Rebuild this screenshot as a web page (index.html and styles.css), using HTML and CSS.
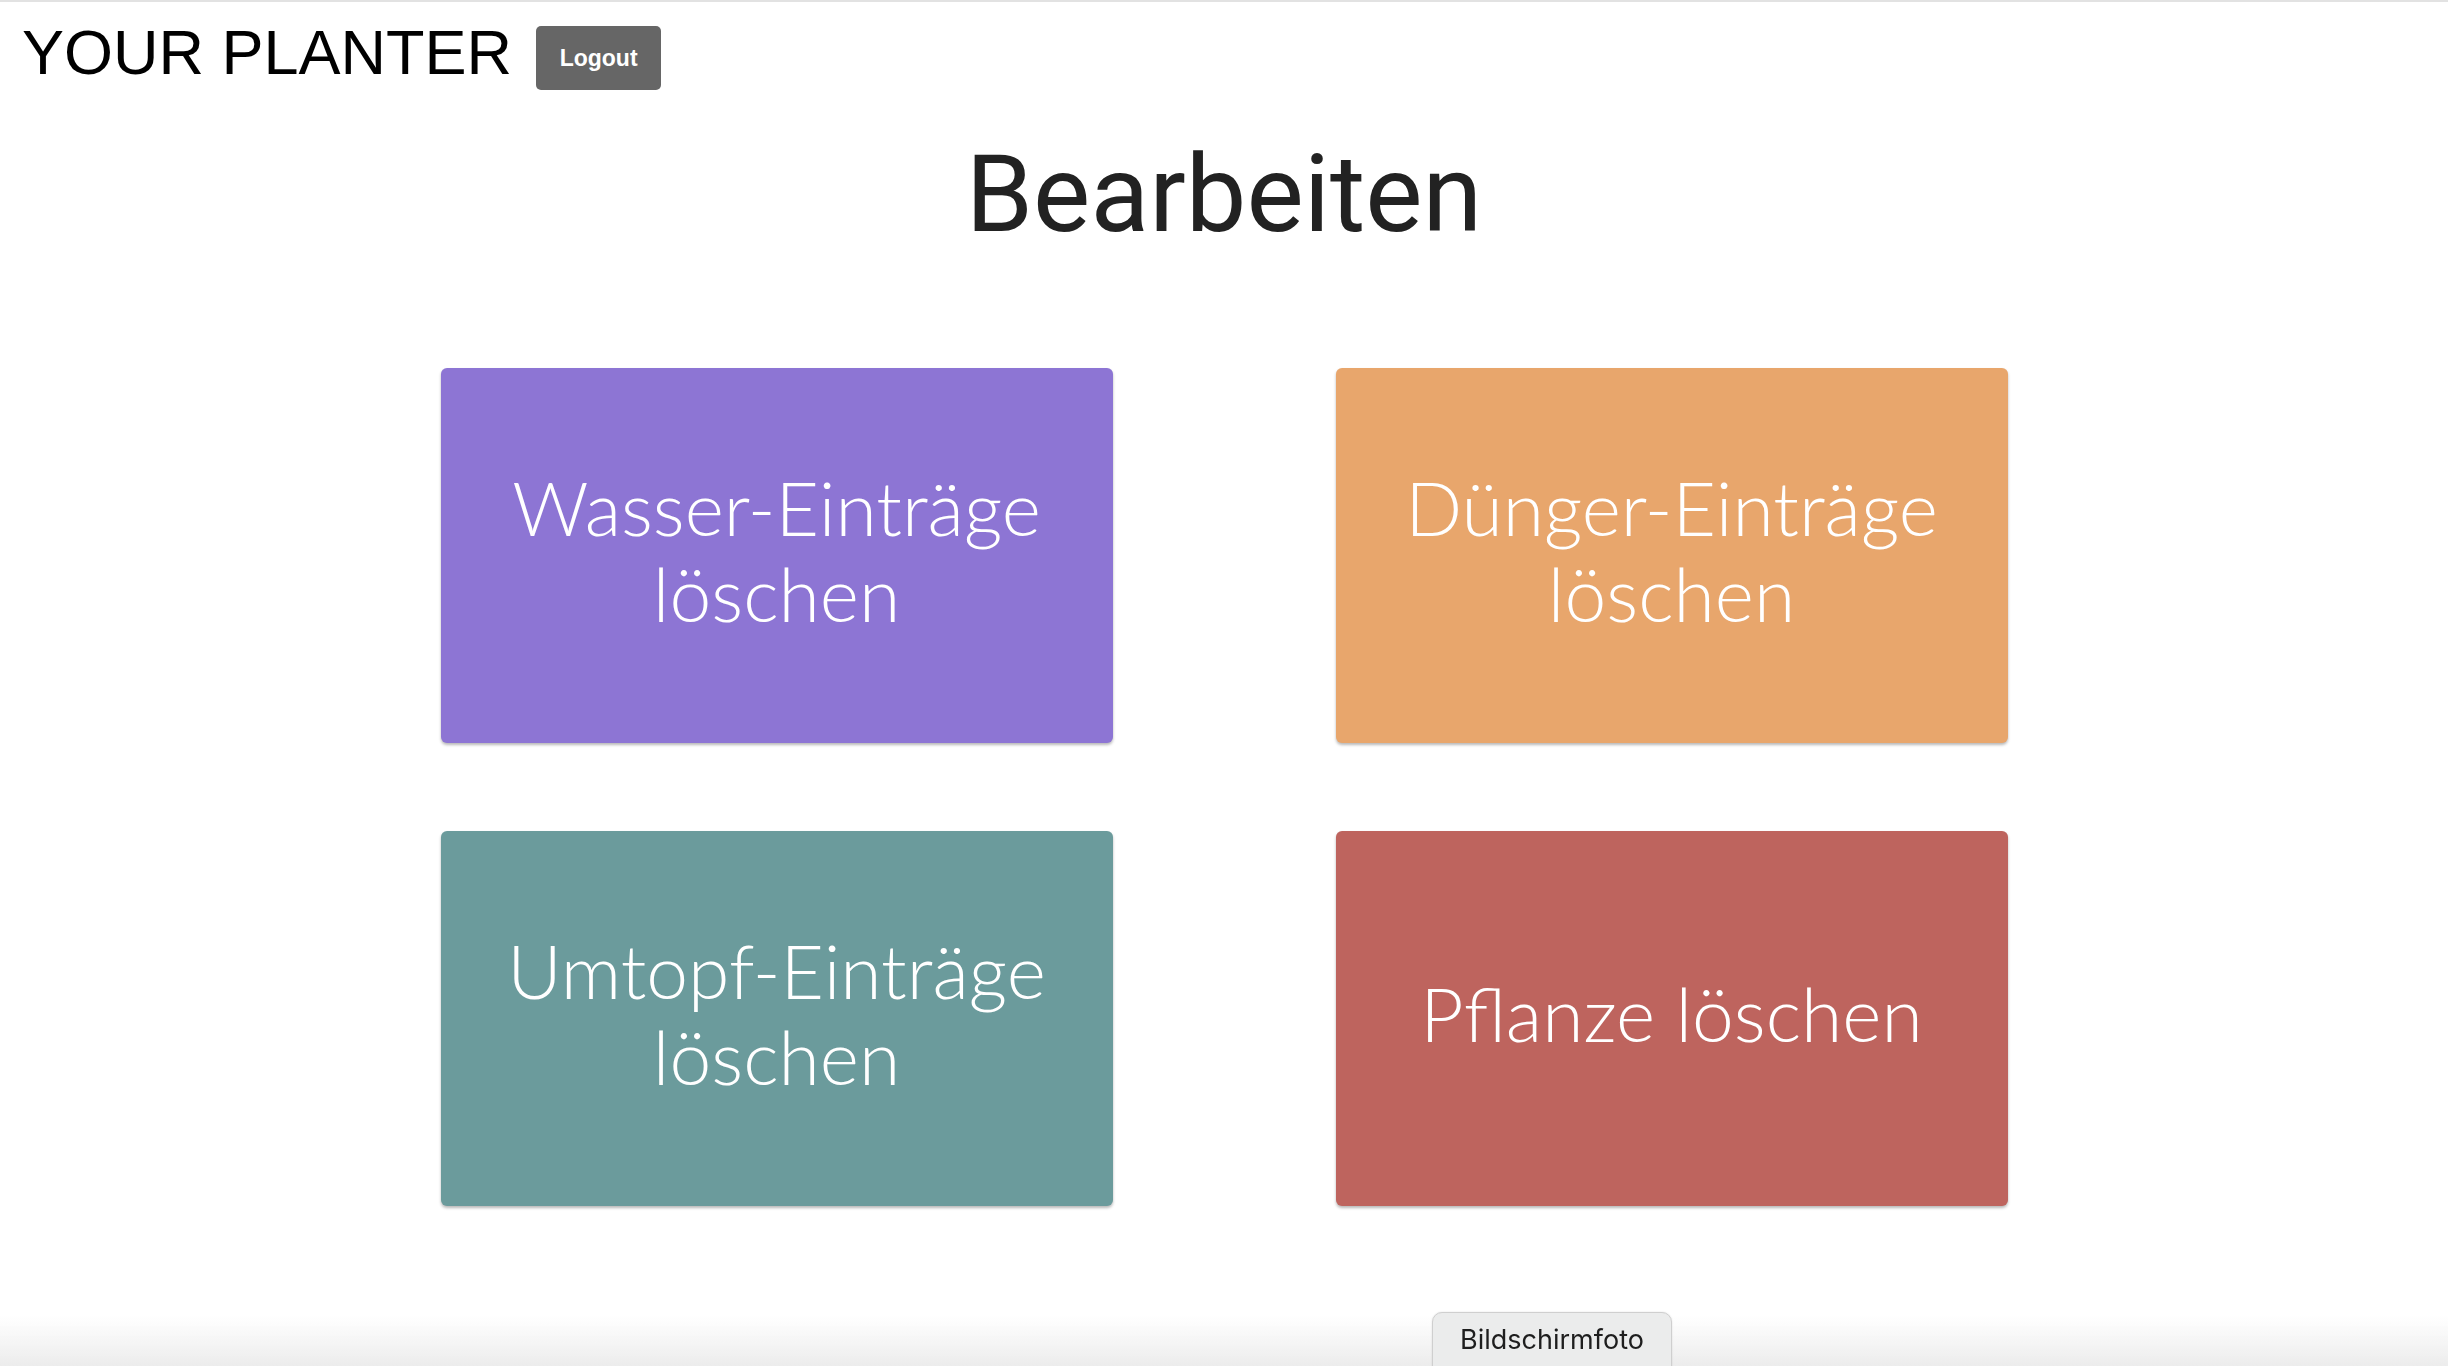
FILE: index.html
```html
<!DOCTYPE html>
<html lang="de">
<head>
<meta charset="utf-8">
<title>Your Planter – Bearbeiten</title>
<link rel="stylesheet" href="styles.css">
</head>
<body>
<div class="page">
  <header class="topbar">
    <div class="brand">YOUR PLANTER</div>
    <button class="logout">Logout</button>
  </header>
  <h1 class="title">Bearbeiten</h1>
  <main class="grid">
    <div class="card card-water">Wasser-Einträge löschen</div>
    <div class="card card-fertilizer">Dünger-Einträge löschen</div>
    <div class="card card-repot">Umtopf-Einträge löschen</div>
    <div class="card card-plant">Pflanze löschen</div>
  </main>
</div>
<div class="bottom-fade"></div>
<div class="snapshot-tab">Bildschirmfoto</div>
</body>
</html>
```

FILE: styles.css
```css
html, body {
  margin: 0;
  padding: 0;
  background: #ffffff;
}

body {
  height: 1366px;
  overflow: hidden;
  border-top: 2px solid #e2e2e2;
  box-sizing: border-box;
}

.page {
  display: flex;
  flex-direction: column;
}

.topbar {
  display: flex;
  align-items: flex-start;
  padding: 18px 0 0 22px;
  gap: 24px;
}

.brand {
  font-family: "Liberation Sans", Arial, sans-serif;
  font-size: 63px;
  line-height: 64px;
  color: #000;
}

.logout {
  margin-top: 6px;
  width: 125px;
  height: 64px;
  border: none;
  border-radius: 5px;
  background: #666666;
  color: #ffffff;
  font-family: "Liberation Sans", Arial, sans-serif;
  font-weight: bold;
  font-size: 23px;
  padding: 0;
}

.title {
  margin: 38px 0 0 0;
  text-align: center;
  font-family: Roboto, sans-serif;
  font-weight: 400;
  font-size: 108px;
  line-height: 132px;
  color: #222222;
}

.grid {
  margin-top: 108px;
  display: grid;
  grid-template-columns: 672px 672px;
  grid-auto-rows: 375px;
  column-gap: 223px;
  row-gap: 88px;
  justify-content: center;
}

.card {
  display: flex;
  align-items: center;
  justify-content: center;
  text-align: center;
  padding: 0 60px 12px;
  border-radius: 6px;
  box-shadow: 0 2px 3px rgba(0, 0, 0, 0.28);
  color: #ffffff;
  font-family: Lato, "Open Sans", sans-serif;
  font-weight: 300;
  font-size: 75px;
  line-height: 86px;
}

.card-water { background: #8d75d4; }
.card-fertilizer { background: #e8a66c; }
.card-repot { background: #6b9b9c; }
.card-plant { background: #be645e; }

.bottom-fade {
  position: fixed;
  left: 0;
  right: 0;
  bottom: 0;
  height: 50px;
  background: linear-gradient(to bottom, rgba(240, 240, 240, 0), rgba(236, 236, 236, 1));
}

.snapshot-tab {
  position: fixed;
  left: 1432px;
  top: 1312px;
  width: 240px;
  height: 80px;
  box-sizing: border-box;
  border: 1px solid #cfcfcf;
  border-radius: 10px;
  background: #ebecec;
  box-shadow: 0 0 2px rgba(0, 0, 0, 0.12);
  text-align: center;
  padding-top: 9px;
  font-family: Inter, Roboto, sans-serif;
  font-size: 27px;
  line-height: 36px;
  color: #1e1e1e;
}
```
